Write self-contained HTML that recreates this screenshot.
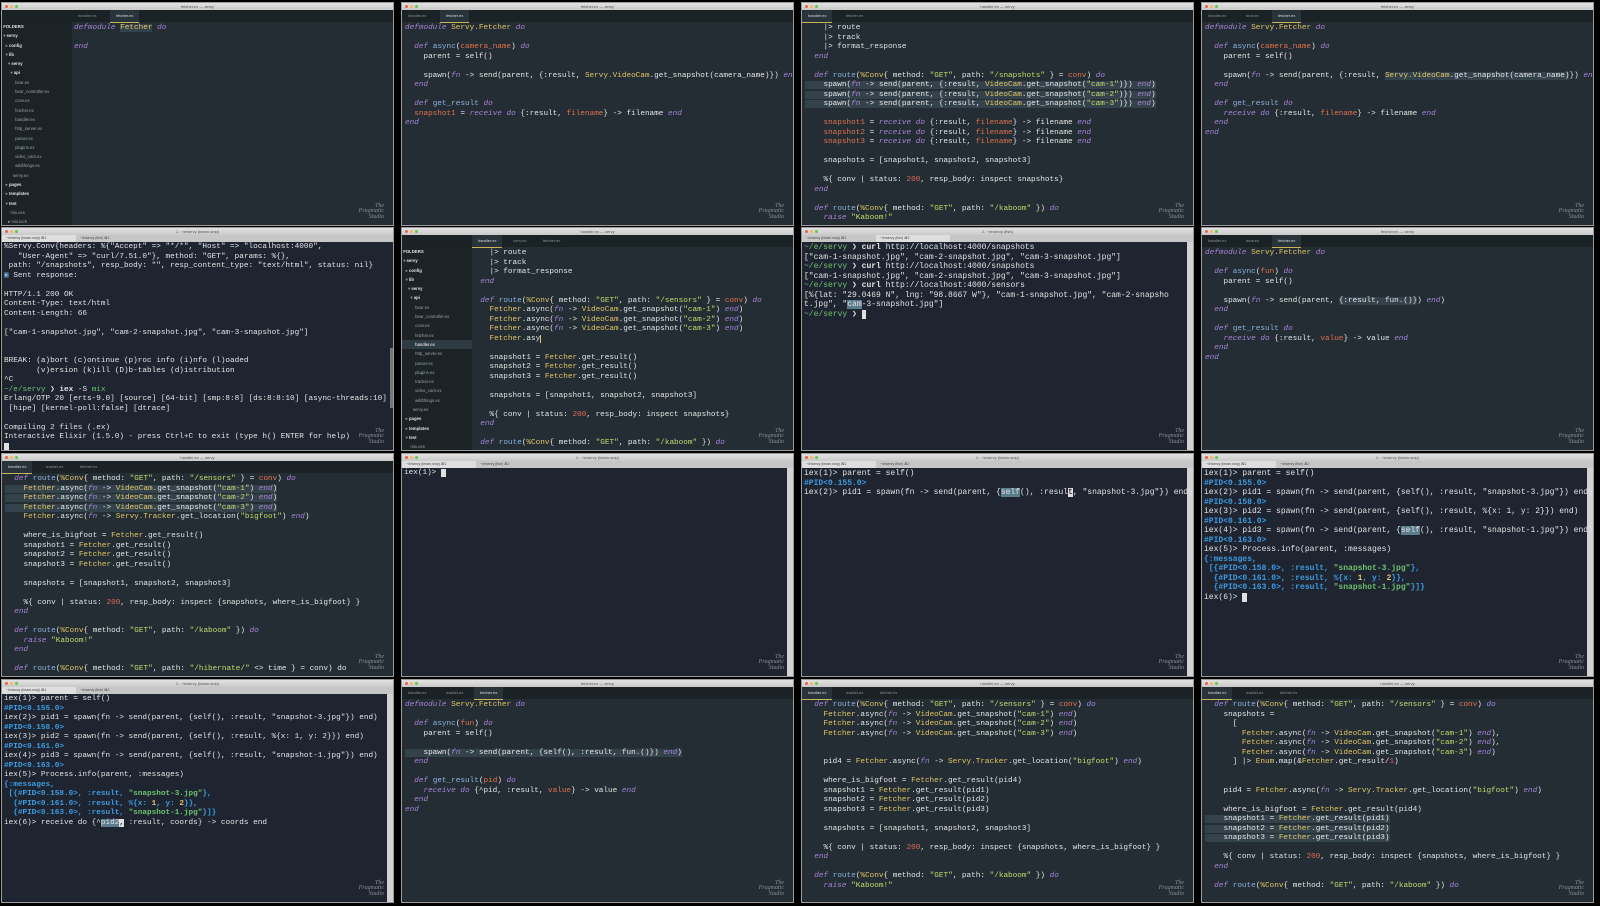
<!DOCTYPE html>
<html><head><meta charset="utf-8"><style>
html,body{margin:0;padding:0;background:#000;width:1600px;height:906px;overflow:hidden;position:relative}
.c{position:absolute;width:391px;height:222px;background:#232d33;overflow:hidden;outline:1px solid #9a9a9a}
.t{position:absolute;left:0;top:0;width:100%;height:7px;background:linear-gradient(#e2e2e2,#c9c9c9);font:4px "Liberation Sans",sans-serif;color:#555;text-align:center;line-height:7px}
.t i{position:absolute;top:2px;width:3px;height:3px;border-radius:50%}
.tabs{position:absolute;left:0;top:7px;width:100%;height:12px;background:#1a2226;font:4px "Liberation Sans",sans-serif;color:#8a9296}
.tabs b{position:absolute;top:0;height:12px;line-height:12px;padding:0 6px;font-weight:normal}
.tabs b.on{background:#28333a;color:#ddd;border-bottom:1px solid #c9b458}
.tt{position:absolute;left:0;top:7px;width:100%;height:7px;background:#c6c6c6;font:3.5px "Liberation Sans",sans-serif;color:#444;line-height:7px}
.tt b{display:inline-block;width:70px;padding-left:4px;font-weight:normal}
.tt b.on{background:#dedede}
.code{position:absolute;top:21px;left:3px;font:7.7px/9.5px "Liberation Mono",monospace;color:#e4e4e4;white-space:pre}
.term{background:#1e2430}
.term .code{top:15px;left:2px;color:#e2e2e2}
.sb{position:absolute;left:0;top:19px;width:70px;bottom:0;background:#1b2327;font:4.3px/9.3px "Liberation Sans",sans-serif;color:#9aa2a6;white-space:pre}
.sb .h{color:#e0e0e0;font-weight:bold}
.scr{position:absolute;right:0;top:14px;width:6px;bottom:0;background:#d2d2d2}
.wm{position:absolute;right:9px;bottom:5px;font:italic 6px/5.5px "Liberation Serif",serif;color:#8a8f93;text-align:right}
.k{color:#a783d9;font-style:italic}.f{color:#8ab4e0}.m{color:#e0c466}.s{color:#c6d96e}.n{color:#e3685a}.v{color:#e0714f}.v2{color:#e0714f}
.p{color:#3d9be0;font-weight:bold}.g{color:#6ec06e}.hl{background:#34434b}.cur{background:#e0e0e0;color:#000}.sel{background:#5a7d8c}
</style></head><body>

<!-- Row 1 -->
<div class="c" style="left:2px;top:3px">
<div class="t"><i style="left:3px;background:#ee5f57"></i><i style="left:8px;background:#f5bd4f"></i><i style="left:13px;background:#5fc454"></i>fetcher.ex — servy</div>
<div class="tabs"><b style="left:70px">handler.ex</b><b class="on" style="left:108px">fetcher.ex</b></div>
<div class="sb"><span class="h"> FOLDERS</span>
 ▾ <span class="h">servy</span>
   ▸ <span class="h">config</span>
   ▾ <span class="h">lib</span>
     ▾ <span class="h">servy</span>
       ▾ <span class="h">api</span>
           bear.ex
           bear_controller.ex
           conv.ex
           fetcher.ex
           handler.ex
           http_server.ex
           parser.ex
           plugins.ex
           video_cam.ex
           wildthings.ex
         servy.ex
   ▸ <span class="h">pages</span>
   ▸ <span class="h">templates</span>
   ▾ <span class="h">test</span>
       mix.exs
     ▸ mix.lock
     ▸ README.md</div>
<div class="code" style="left:72px"><span class="k">defmodule</span> <span class="m hl">Fetcher</span> <span class="k">do</span>

<span class="k">end</span></div>
<div class="wm">The<br>Pragmatic<br>Studio</div>
</div>

<div class="c" style="left:402px;top:3px">
<div class="t"><i style="left:3px;background:#ee5f57"></i><i style="left:8px;background:#f5bd4f"></i><i style="left:13px;background:#5fc454"></i>fetcher.ex — servy</div>
<div class="tabs"><b>handler.ex</b><b class="on" style="left:38px">fetcher.ex</b></div>
<div class="code"><span class="k">defmodule</span> <span class="m">Servy.Fetcher</span> <span class="k">do</span>

  <span class="k">def</span> <span class="f">async</span>(<span class="v">camera_name</span>) <span class="k">do</span>
    parent = self()

    spawn(<span class="k">fn</span> -> send(parent, {:result, <span class="m">Servy.VideoCam</span>.get_snapshot(camera_name)}) <span class="k">end</span>)
  <span class="k">end</span>

  <span class="k">def</span> <span class="f">get_result</span> <span class="k">do</span>
  <span class="v">snapshot1</span> = <span class="k">receive</span> <span class="k">do</span> {:result, <span class="v">filename</span>} -> filename <span class="k">end</span>
<span class="k">end</span></div>
<div class="wm">The<br>Pragmatic<br>Studio</div>
</div>

<div class="c" style="left:802px;top:3px">
<div class="t"><i style="left:3px;background:#ee5f57"></i><i style="left:8px;background:#f5bd4f"></i><i style="left:13px;background:#5fc454"></i>handler.ex — servy</div>
<div class="tabs"><b class="on">handler.ex</b><b style="left:38px">fetcher.ex</b></div>
<div class="code">    |> route
    |> track
    |> format_response
  <span class="k">end</span>

  <span class="k">def</span> <span class="f">route</span>(<span class="m">%Conv</span>{ method: <span class="s">"GET"</span>, path: <span class="s">"/snapshots"</span> } = <span class="v">conv</span>) <span class="k">do</span>
<span class="hl">    spawn(<span class="k">fn</span> -> send(parent, {:result, <span class="m">VideoCam</span>.get_snapshot(<span class="s">"cam-1"</span>)}) <span class="k">end</span>)
    spawn(<span class="k">fn</span> -> send(parent, {:result, <span class="m">VideoCam</span>.get_snapshot(<span class="s">"cam-2"</span>)}) <span class="k">end</span>)
    spawn(<span class="k">fn</span> -> send(parent, {:result, <span class="m">VideoCam</span>.get_snapshot(<span class="s">"cam-3"</span>)}) <span class="k">end</span>)</span>

    <span class="v">snapshot1</span> = <span class="k">receive</span> <span class="k">do</span> {:result, <span class="v">filename</span>} -> filename <span class="k">end</span>
    <span class="v">snapshot2</span> = <span class="k">receive</span> <span class="k">do</span> {:result, <span class="v">filename</span>} -> filename <span class="k">end</span>
    <span class="v">snapshot3</span> = <span class="k">receive</span> <span class="k">do</span> {:result, <span class="v">filename</span>} -> filename <span class="k">end</span>

    snapshots = [snapshot1, snapshot2, snapshot3]

    %{ conv | status: <span class="n">200</span>, resp_body: inspect snapshots}
  <span class="k">end</span>

  <span class="k">def</span> <span class="f">route</span>(<span class="m">%Conv</span>{ method: <span class="s">"GET"</span>, path: <span class="s">"/kaboom"</span> }) <span class="k">do</span>
    <span class="k">raise</span> <span class="s">"Kaboom!"</span></div>
<div class="wm">The<br>Pragmatic<br>Studio</div>
</div>

<div class="c" style="left:1202px;top:3px">
<div class="t"><i style="left:3px;background:#ee5f57"></i><i style="left:8px;background:#f5bd4f"></i><i style="left:13px;background:#5fc454"></i>fetcher.ex — servy</div>
<div class="tabs"><b>handler.ex</b><b style="left:38px">bear.ex</b><b class="on" style="left:70px">fetcher.ex</b></div>
<div class="code"><span class="k">defmodule</span> <span class="m">Servy.Fetcher</span> <span class="k">do</span>

  <span class="k">def</span> <span class="f">async</span>(<span class="v">camera_name</span>) <span class="k">do</span>
    parent = self()

    spawn(<span class="k">fn</span> -> send(parent, {:result, <span class="m hl">Servy.VideoCam</span><span class="hl">.get_snapshot(camera_name)</span>}) <span class="k">end</span>)
  <span class="k">end</span>

  <span class="k">def</span> <span class="f">get_result</span> <span class="k">do</span>
    <span class="k">receive</span> <span class="k">do</span> {:result, <span class="v">filename</span>} -> filename <span class="k">end</span>
  <span class="k">end</span>
<span class="k">end</span></div>
<div class="wm">The<br>Pragmatic<br>Studio</div>
</div>

<!-- Row 2 -->
<div class="c term" style="left:2px;top:228px">
<div class="t"><i style="left:3px;background:#ee5f57"></i><i style="left:8px;background:#f5bd4f"></i><i style="left:13px;background:#5fc454"></i>1. ~/e/servy (beam.smp)</div>
<div class="tt"><b class="on">~/e/servy (beam.smp) ⌘1</b><b>~/e/servy (fish) ⌘2</b></div>
<div class="scr" style="top:120px;width:3px;height:60px;background:#777"></div>
<div class="code">%Servy.Conv{headers: %{"Accept" => "*/*", "Host" => "localhost:4000",
   "User-Agent" => "curl/7.51.0"}, method: "GET", params: %{},
 path: "/snapshots", resp_body: "", resp_content_type: "text/html", status: nil}
<span style="color:#7fb3e0">▣</span> Sent response:

HTTP/1.1 200 OK
Content-Type: text/html
Content-Length: 66

["cam-1-snapshot.jpg", "cam-2-snapshot.jpg", "cam-3-snapshot.jpg"]


BREAK: (a)bort (c)ontinue (p)roc info (i)nfo (l)oaded
       (v)ersion (k)ill (D)b-tables (d)istribution
^C
<span class="g">~/e/servy</span> ❯ <b>iex</b> -S <span class="g">mix</span>
Erlang/OTP 20 [erts-9.0] [source] [64-bit] [smp:8:8] [ds:8:8:10] [async-threads:10]
 [hipe] [kernel-poll:false] [dtrace]

Compiling 2 files (.ex)
Interactive Elixir (1.5.0) - press Ctrl+C to exit (type h() ENTER for help)
<span class="cur">&nbsp;</span></div>
<div class="wm">The<br>Pragmatic<br>Studio</div>
</div>

<div class="c" style="left:402px;top:228px">
<div class="t"><i style="left:3px;background:#ee5f57"></i><i style="left:8px;background:#f5bd4f"></i><i style="left:13px;background:#5fc454"></i>handler.ex — servy</div>
<div class="tabs"><b class="on" style="left:70px">handler.ex</b><b style="left:105px">conv.ex</b><b style="left:135px">fetcher.ex</b></div>
<div class="sb"><span class="h"> FOLDERS</span>
 ▾ <span class="h">servy</span>
   ▸ <span class="h">config</span>
   ▾ <span class="h">lib</span>
     ▾ <span class="h">servy</span>
       ▾ <span class="h">api</span>
           bear.ex
           bear_controller.ex
           conv.ex
           fetcher.ex
<span style="background:#2e3b42;display:inline-block;width:70px;color:#fff">           handler.ex</span>
           http_server.ex
           parser.ex
           plugins.ex
           tracker.ex
           video_cam.ex
           wildthings.ex
         servy.ex
   ▸ <span class="h">pages</span>
   ▸ <span class="h">templates</span>
   ▾ <span class="h">test</span>
       mix.exs
     ▸ mix.lock</div>
<div class="code" style="left:69px">    |> route
    |> track
    |> format_response
  <span class="k">end</span>

  <span class="k">def</span> <span class="f">route</span>(<span class="m">%Conv</span>{ method: <span class="s">"GET"</span>, path: <span class="s">"/sensors"</span> } = <span class="v">conv</span>) <span class="k">do</span>
    <span class="m">Fetcher</span>.async(<span class="k">fn</span> -> <span class="m">VideoCam</span>.get_snapshot(<span class="s">"cam-1"</span>) <span class="k">end</span>)
    <span class="m">Fetcher</span>.async(<span class="k">fn</span> -> <span class="m">VideoCam</span>.get_snapshot(<span class="s">"cam-2"</span>) <span class="k">end</span>)
    <span class="m">Fetcher</span>.async(<span class="k">fn</span> -> <span class="m">VideoCam</span>.get_snapshot(<span class="s">"cam-3"</span>) <span class="k">end</span>)
    <span class="m">Fetcher</span>.asy<span style="border-left:1px solid #e0c466"></span>

    snapshot1 = <span class="m">Fetcher</span>.get_result()
    snapshot2 = <span class="m">Fetcher</span>.get_result()
    snapshot3 = <span class="m">Fetcher</span>.get_result()

    snapshots = [snapshot1, snapshot2, snapshot3]

    %{ conv | status: <span class="n">200</span>, resp_body: inspect snapshots}
  <span class="k">end</span>

  <span class="k">def</span> <span class="f">route</span>(<span class="m">%Conv</span>{ method: <span class="s">"GET"</span>, path: <span class="s">"/kaboom"</span> }) <span class="k">do</span></div>
<div class="wm">The<br>Pragmatic<br>Studio</div>
</div>

<div class="c term" style="left:802px;top:228px">
<div class="t"><i style="left:3px;background:#ee5f57"></i><i style="left:8px;background:#f5bd4f"></i><i style="left:13px;background:#5fc454"></i>2. ~/e/servy (fish)</div>
<div class="tt"><b>~/e/servy (beam.smp) ⌘1</b><b class="on">~/e/servy (fish) ⌘2</b></div>
<div class="scr"></div>
<div class="code" style="font-size:8px"><span class="g">~/e/servy</span> ❯ <b>curl</b> http://localhost:4000/snapshots
["cam-1-snapshot.jpg", "cam-2-snapshot.jpg", "cam-3-snapshot.jpg"]
<span class="g">~/e/servy</span> ❯ <b>curl</b> http://localhost:4000/snapshots
["cam-1-snapshot.jpg", "cam-2-snapshot.jpg", "cam-3-snapshot.jpg"]
<span class="g">~/e/servy</span> ❯ <b>curl</b> http://localhost:4000/sensors
[%{lat: "29.0469 N", lng: "98.8667 W"}, "cam-1-snapshot.jpg", "cam-2-snapsho
t.jpg", "<span class="sel">cam</span>-3-snapshot.jpg"]
<span class="g">~/e/servy</span> ❯ <span class="cur">&nbsp;</span></div>
<div class="wm">The<br>Pragmatic<br>Studio</div>
</div>

<div class="c" style="left:1202px;top:228px">
<div class="t"><i style="left:3px;background:#ee5f57"></i><i style="left:8px;background:#f5bd4f"></i><i style="left:13px;background:#5fc454"></i>fetcher.ex — servy</div>
<div class="tabs"><b>handler.ex</b><b style="left:38px">bear.ex</b><b class="on" style="left:70px">fetcher.ex</b></div>
<div class="code"><span class="k">defmodule</span> <span class="m">Servy.Fetcher</span> <span class="k">do</span>

  <span class="k">def</span> <span class="f">async</span>(<span class="v">fun</span>) <span class="k">do</span>
    parent = self()

    spawn(<span class="k">fn</span> -> send(parent, <span class="hl">{:result, fun.()}</span>) <span class="k">end</span>)
  <span class="k">end</span>

  <span class="k">def</span> <span class="f">get_result</span> <span class="k">do</span>
    <span class="k">receive</span> <span class="k">do</span> {:result, <span class="v">value</span>} -> value <span class="k">end</span>
  <span class="k">end</span>
<span class="k">end</span></div>
<div class="wm">The<br>Pragmatic<br>Studio</div>
</div>

<!-- Row 3 -->
<div class="c" style="left:2px;top:454px">
<div class="t"><i style="left:3px;background:#ee5f57"></i><i style="left:8px;background:#f5bd4f"></i><i style="left:13px;background:#5fc454"></i>handler.ex — servy</div>
<div class="tabs"><b class="on">handler.ex</b><b style="left:38px">tracker.ex</b><b style="left:72px">fetcher.ex</b></div>
<div class="code">  <span class="k">def</span> <span class="f">route</span>(<span class="m">%Conv</span>{ method: <span class="s">"GET"</span>, path: <span class="s">"/sensors"</span> } = <span class="v">conv</span>) <span class="k">do</span>
<span class="hl">    <span class="m">Fetcher</span>.async(<span class="k">fn</span> -> <span class="m">VideoCam</span>.get_snapshot(<span class="s">"cam-1"</span>) <span class="k">end</span>)
    <span class="m">Fetcher</span>.async(<span class="k">fn</span> -> <span class="m">VideoCam</span>.get_snapshot(<span class="s">"cam-2"</span>) <span class="k">end</span>)
    <span class="m">Fetcher</span>.async(<span class="k">fn</span> -> <span class="m">VideoCam</span>.get_snapshot(<span class="s">"cam-3"</span>) <span class="k">end</span>)</span>
    <span class="m">Fetcher</span>.async(<span class="k">fn</span> -> <span class="m">Servy.Tracker</span>.get_location(<span class="s">"bigfoot"</span>) <span class="k">end</span>)

    where_is_bigfoot = <span class="m">Fetcher</span>.get_result()
    snapshot1 = <span class="m">Fetcher</span>.get_result()
    snapshot2 = <span class="m">Fetcher</span>.get_result()
    snapshot3 = <span class="m">Fetcher</span>.get_result()

    snapshots = [snapshot1, snapshot2, snapshot3]

    %{ conv | status: <span class="n">200</span>, resp_body: inspect {snapshots, where_is_bigfoot} }
  <span class="k">end</span>

  <span class="k">def</span> <span class="f">route</span>(<span class="m">%Conv</span>{ method: <span class="s">"GET"</span>, path: <span class="s">"/kaboom"</span> }) <span class="k">do</span>
    <span class="k">raise</span> <span class="s">"Kaboom!"</span>
  <span class="k">end</span>

  <span class="k">def</span> <span class="f">route</span>(<span class="m">%Conv</span>{ method: <span class="s">"GET"</span>, path: <span class="s">"/hibernate/"</span> <> time } = conv) do</div>
<div class="wm">The<br>Pragmatic<br>Studio</div>
</div>

<div class="c term" style="left:402px;top:454px">
<div class="t"><i style="left:3px;background:#ee5f57"></i><i style="left:8px;background:#f5bd4f"></i><i style="left:13px;background:#5fc454"></i>1. ~/e/servy (beam.smp)</div>
<div class="tt"><b class="on">~/e/servy (beam.smp) ⌘1</b><b>~/e/servy (fish) ⌘2</b></div>
<div class="scr"></div>
<div class="code">iex(1)> <span class="cur">&nbsp;</span></div>
<div class="wm">The<br>Pragmatic<br>Studio</div>
</div>

<div class="c term" style="left:802px;top:454px">
<div class="t"><i style="left:3px;background:#ee5f57"></i><i style="left:8px;background:#f5bd4f"></i><i style="left:13px;background:#5fc454"></i>1. ~/e/servy (beam.smp)</div>
<div class="tt"><b class="on">~/e/servy (beam.smp) ⌘1</b><b>~/e/servy (fish) ⌘2</b></div>
<div class="scr"></div>
<div class="code" style="font-size:8px">iex(1)> parent = self()
<span class="p">#PID&lt;0.155.0&gt;</span>
iex(2)> pid1 = spawn(fn -> send(parent, {<span class="sel">self</span>(), :resul<span class="cur">t</span>, "snapshot-3.jpg"}) end)</div>
<div class="wm">The<br>Pragmatic<br>Studio</div>
</div>

<div class="c term" style="left:1202px;top:454px">
<div class="t"><i style="left:3px;background:#ee5f57"></i><i style="left:8px;background:#f5bd4f"></i><i style="left:13px;background:#5fc454"></i>1. ~/e/servy (beam.smp)</div>
<div class="tt"><b class="on">~/e/servy (beam.smp) ⌘1</b><b>~/e/servy (fish) ⌘2</b></div>
<div class="scr"></div>
<div class="code" style="font-size:8px">iex(1)> parent = self()
<span class="p">#PID&lt;0.155.0&gt;</span>
iex(2)> pid1 = spawn(fn -> send(parent, {self(), :result, "snapshot-3.jpg"}) end)
<span class="p">#PID&lt;0.158.0&gt;</span>
iex(3)> pid2 = spawn(fn -> send(parent, {self(), :result, %{x: 1, y: 2}}) end)
<span class="p">#PID&lt;0.161.0&gt;</span>
iex(4)> pid3 = spawn(fn -> send(parent, {<span class="sel">self</span>(), :result, "snapshot-1.jpg"}) end)
<span class="p">#PID&lt;0.163.0&gt;</span>
iex(5)> Process.info(parent, :messages)
<span class="p">{:messages,
 [{#PID&lt;0.158.0&gt;, :result, <span class="g">"snapshot-3.jpg"</span>},
  {#PID&lt;0.161.0&gt;, :result, %{x: <span class="m">1</span>, y: <span class="m">2</span>}},
  {#PID&lt;0.163.0&gt;, :result, <span class="g">"snapshot-1.jpg"</span>}]}</span>
iex(6)> <span class="cur">&nbsp;</span></div>
<div class="wm">The<br>Pragmatic<br>Studio</div>
</div>

<!-- Row 4 -->
<div class="c term" style="left:2px;top:680px">
<div class="t"><i style="left:3px;background:#ee5f57"></i><i style="left:8px;background:#f5bd4f"></i><i style="left:13px;background:#5fc454"></i>1. ~/e/servy (beam.smp)</div>
<div class="tt"><b class="on">~/e/servy (beam.smp) ⌘1</b><b>~/e/servy (fish) ⌘2</b></div>
<div class="scr"></div>
<div class="code">iex(1)> parent = self()
<span class="p">#PID&lt;0.155.0&gt;</span>
iex(2)> pid1 = spawn(fn -> send(parent, {self(), :result, "snapshot-3.jpg"}) end)
<span class="p">#PID&lt;0.158.0&gt;</span>
iex(3)> pid2 = spawn(fn -> send(parent, {self(), :result, %{x: 1, y: 2}}) end)
<span class="p">#PID&lt;0.161.0&gt;</span>
iex(4)> pid3 = spawn(fn -> send(parent, {self(), :result, "snapshot-1.jpg"}) end)
<span class="p">#PID&lt;0.163.0&gt;</span>
iex(5)> Process.info(parent, :messages)
<span class="p">{:messages,
 [{#PID&lt;0.158.0&gt;, :result, <span class="g">"snapshot-3.jpg"</span>},
  {#PID&lt;0.161.0&gt;, :result, %{x: <span class="m">1</span>, y: <span class="m">2</span>}},
  {#PID&lt;0.163.0&gt;, :result, <span class="g">"snapshot-1.jpg"</span>}]}</span>
iex(6)> receive do {^<span class="sel">pid2</span><span class="cur">,</span> :result, coords} -> coords end</div>
<div class="wm">The<br>Pragmatic<br>Studio</div>
</div>

<div class="c" style="left:402px;top:680px">
<div class="t"><i style="left:3px;background:#ee5f57"></i><i style="left:8px;background:#f5bd4f"></i><i style="left:13px;background:#5fc454"></i>fetcher.ex — servy</div>
<div class="tabs"><b>handler.ex</b><b style="left:38px">tracker.ex</b><b class="on" style="left:72px">fetcher.ex</b></div>
<div class="code"><span class="k">defmodule</span> <span class="m">Servy.Fetcher</span> <span class="k">do</span>

  <span class="k">def</span> <span class="f">async</span>(<span class="v">fun</span>) <span class="k">do</span>
    parent = self()

<span class="hl">    spawn(<span class="k">fn</span> -> send(parent, {self(), :result, fun.()}) <span class="k">end</span>)</span>
  <span class="k">end</span>

  <span class="k">def</span> <span class="f">get_result</span>(<span class="v">pid</span>) <span class="k">do</span>
    <span class="k">receive</span> <span class="k">do</span> {^pid, :result, <span class="v">value</span>} -> value <span class="k">end</span>
  <span class="k">end</span>
<span class="k">end</span></div>
<div class="wm">The<br>Pragmatic<br>Studio</div>
</div>

<div class="c" style="left:802px;top:680px">
<div class="t"><i style="left:3px;background:#ee5f57"></i><i style="left:8px;background:#f5bd4f"></i><i style="left:13px;background:#5fc454"></i>handler.ex — servy</div>
<div class="tabs"><b class="on">handler.ex</b><b style="left:38px">tracker.ex</b><b style="left:72px">fetcher.ex</b></div>
<div class="code">  <span class="k">def</span> <span class="f">route</span>(<span class="m">%Conv</span>{ method: <span class="s">"GET"</span>, path: <span class="s">"/sensors"</span> } = <span class="v">conv</span>) <span class="k">do</span>
    <span class="m">Fetcher</span>.async(<span class="k">fn</span> -> <span class="m">VideoCam</span>.get_snapshot(<span class="s">"cam-1"</span>) <span class="k">end</span>)
    <span class="m">Fetcher</span>.async(<span class="k">fn</span> -> <span class="m">VideoCam</span>.get_snapshot(<span class="s">"cam-2"</span>) <span class="k">end</span>)
    <span class="m">Fetcher</span>.async(<span class="k">fn</span> -> <span class="m">VideoCam</span>.get_snapshot(<span class="s">"cam-3"</span>) <span class="k">end</span>)


    pid4 = <span class="m">Fetcher</span>.async(<span class="k">fn</span> -> <span class="m">Servy.Tracker</span>.get_location(<span class="s">"bigfoot"</span>) <span class="k">end</span>)

    where_is_bigfoot = <span class="m">Fetcher</span>.get_result(pid4)
    snapshot1 = <span class="m">Fetcher</span>.get_result(pid1)
    snapshot2 = <span class="m">Fetcher</span>.get_result(pid2)
    snapshot3 = <span class="m">Fetcher</span>.get_result(pid3)

    snapshots = [snapshot1, snapshot2, snapshot3]

    %{ conv | status: <span class="n">200</span>, resp_body: inspect {snapshots, where_is_bigfoot} }
  <span class="k">end</span>

  <span class="k">def</span> <span class="f">route</span>(<span class="m">%Conv</span>{ method: <span class="s">"GET"</span>, path: <span class="s">"/kaboom"</span> }) <span class="k">do</span>
    <span class="k">raise</span> <span class="s">"Kaboom!"</span></div>
<div class="wm">The<br>Pragmatic<br>Studio</div>
</div>

<div class="c" style="left:1202px;top:680px">
<div class="t"><i style="left:3px;background:#ee5f57"></i><i style="left:8px;background:#f5bd4f"></i><i style="left:13px;background:#5fc454"></i>handler.ex — servy</div>
<div class="tabs"><b class="on">handler.ex</b><b style="left:38px">tracker.ex</b><b style="left:72px">fetcher.ex</b></div>
<div class="code">  <span class="k">def</span> <span class="f">route</span>(<span class="m">%Conv</span>{ method: <span class="s">"GET"</span>, path: <span class="s">"/sensors"</span> } = <span class="v">conv</span>) <span class="k">do</span>
    snapshots =
      [
        <span class="m">Fetcher</span>.async(<span class="k">fn</span> -> <span class="m">VideoCam</span>.get_snapshot(<span class="s">"cam-1"</span>) <span class="k">end</span>),
        <span class="m">Fetcher</span>.async(<span class="k">fn</span> -> <span class="m">VideoCam</span>.get_snapshot(<span class="s">"cam-2"</span>) <span class="k">end</span>),
        <span class="m">Fetcher</span>.async(<span class="k">fn</span> -> <span class="m">VideoCam</span>.get_snapshot(<span class="s">"cam-3"</span>) <span class="k">end</span>)
      ] |> <span class="m">Enum</span>.map(&amp;<span class="m">Fetcher</span>.get_result/<span class="n">1</span>)


    pid4 = <span class="m">Fetcher</span>.async(<span class="k">fn</span> -> <span class="m">Servy.Tracker</span>.get_location(<span class="s">"bigfoot"</span>) <span class="k">end</span>)

    where_is_bigfoot = <span class="m">Fetcher</span>.get_result(pid4)
<span class="hl">    snapshot1 = <span class="m">Fetcher</span>.get_result(pid1)
    snapshot2 = <span class="m">Fetcher</span>.get_result(pid2)
    snapshot3 = <span class="m">Fetcher</span>.get_result(pid3)</span>

    %{ conv | status: <span class="n">200</span>, resp_body: inspect {snapshots, where_is_bigfoot} }
  <span class="k">end</span>

  <span class="k">def</span> <span class="f">route</span>(<span class="m">%Conv</span>{ method: <span class="s">"GET"</span>, path: <span class="s">"/kaboom"</span> }) <span class="k">do</span></div>
<div class="wm">The<br>Pragmatic<br>Studio</div>
</div>

</body></html>
